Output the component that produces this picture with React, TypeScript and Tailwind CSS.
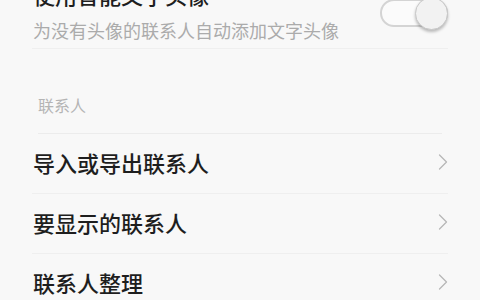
const font = { fontFamily: '"Noto Sans CJK SC", "Noto Sans", sans-serif' };

function Chevron() {
  return (
    <svg width="10" height="16" viewBox="0 0 10 16" fill="none" className="shrink-0">
      <polyline points="1.5,1 8.5,8 1.5,15" stroke="#b8b8b8" strokeWidth="1.3" strokeLinecap="round" strokeLinejoin="round" />
    </svg>
  );
}

function Toggle() {
  return (
    <div className="relative w-[68px] h-[33px] shrink-0 mt-[16px]">
      <div className="absolute left-0 top-[2px] w-[68px] h-[28px] rounded-full border-2 border-[#d4d4d4] bg-[#fbfbfb]" />
      <div className="absolute right-0 top-0 w-[33px] h-[33px] rounded-full bg-[#f2f2f2] border border-[#c8c8c8] shadow-[0_2px_3px_rgba(0,0,0,0.25)]" />
    </div>
  );
}

const rows = ['导入或导出联系人', '要显示的联系人', '联系人整理'];

export default function App() {
  return (
    <div className="w-[480px] h-[300px] overflow-hidden bg-[#f8f8f8] flex flex-col" style={font}>
      <div className="mx-[32px] pl-px -mt-[19px] pb-[7px] border-b border-[#efefef] flex justify-between">
        <div className="flex flex-col">
          <div className="text-[22px] leading-[26px] font-medium text-[#1e1e1e]">使用智能文字头像</div>
          <div className="mt-[12px] text-[18px] leading-[22px] text-[#ababab]">为没有头像的联系人自动添加文字头像</div>
        </div>
        <Toggle />
      </div>

      <div className="ml-[38px] mr-[38px] pt-[46px] pb-[18px] border-b border-[#ececec] text-[16px] leading-[20px] text-[#b4b4b4]">
        联系人
      </div>

      {rows.map((r) => (
        <div key={r} className="mx-[32px] pl-px h-[60px] shrink-0 flex items-center justify-between border-b border-[#efefef] pb-[3px]">
          <span className="text-[22px] leading-[26px] font-medium text-[#1e1e1e]">{r}</span>
          <Chevron />
        </div>
      ))}
    </div>
  );
}
